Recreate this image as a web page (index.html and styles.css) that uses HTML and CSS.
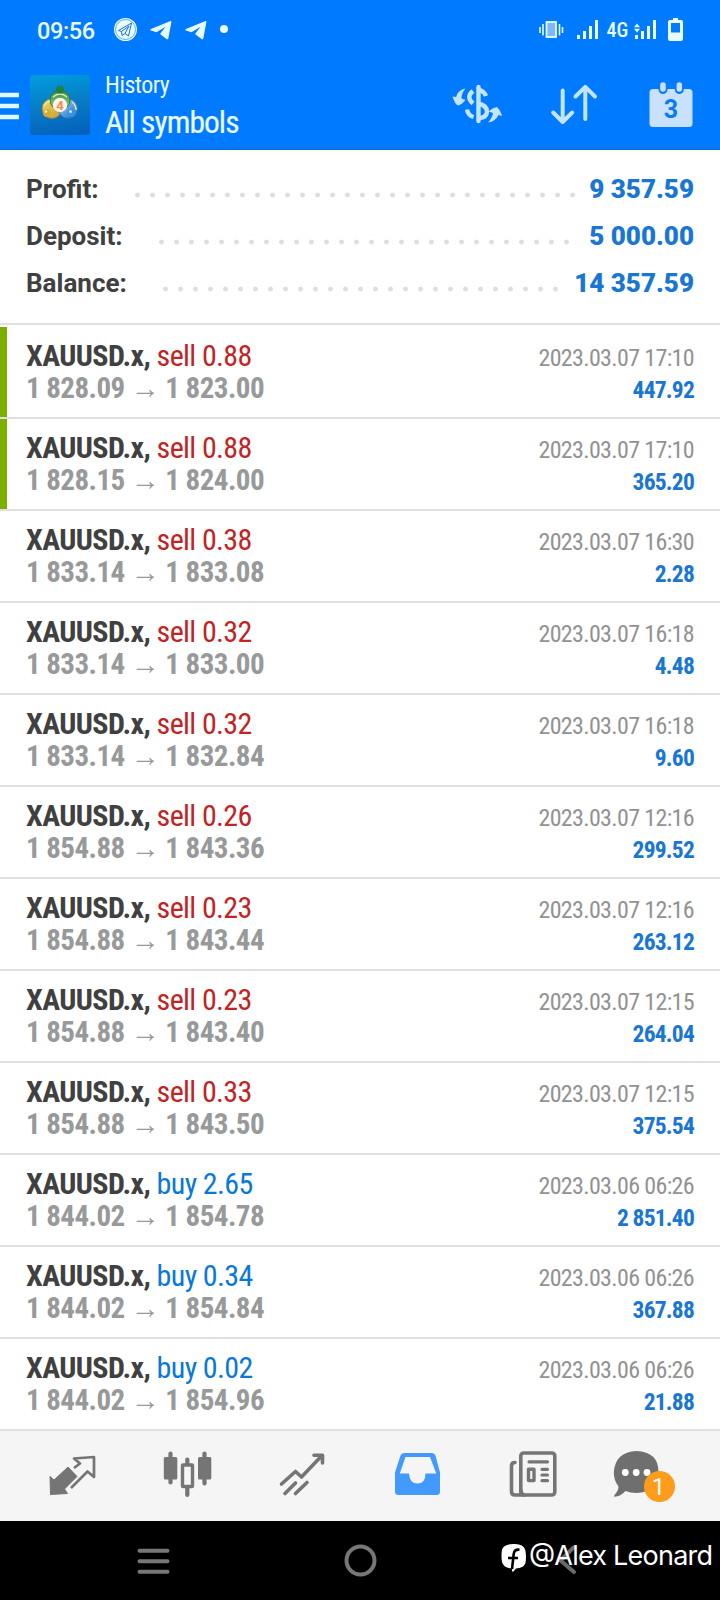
FILE: index.html
```html
<!DOCTYPE html>
<html lang="en">
<head>
<meta charset="utf-8">
<title>History</title>
<link rel="stylesheet" href="styles.css">
</head>
<body>
<header class="top">
  <div class="status">
    <span class="clock">09:56</span>
    <svg class="notif" width="120" height="28" viewBox="112 16 120 28">
      <circle cx="125.500" cy="29.500" r="11.500" fill="#e8fbff"/>
      <circle cx="125.500" cy="29.500" r="10" fill="none" stroke="#2a86f0" stroke-width=".7"/>
      <path d="M118.500 30.500L131.500 23L128.500 36L125 33.500L122 35.500L121.500 31.500Z M121.500 31.500L129 26L125 33.500" fill="none" stroke="#1c6fd0" stroke-width="1"/>
      <path id="plane" d="M151 29L170.500 21Q171.500 20.800 171.400 22L168.300 38.500Q168 39.900 166.500 39L160 34L165.500 26.800L156.500 32.200L151 30.500Q149.200 29.800 151 29Z" fill="#e8fbff"/>
      <use href="#plane" x="35"/>
      <circle cx="224" cy="29" r="4" fill="#e8fbff"/>
    </svg>
    <svg class="signals" width="150" height="28" viewBox="536 16 150 28" fill="#e8fbff">
      <path d="M540 27v6M543 24v11.500M559.500 24v11.500M562.500 27v6" stroke="#e8fbff" stroke-width="1.600"/>
      <rect x="546.500" y="22" width="9.500" height="15" fill="#7db8ff" stroke="#e8fbff" stroke-width="1.800"/>
      <path d="M577 35h3v4h-3zM583 31h3v8h-3zM589 26h3v13h-3zM595 20h3v19h-3z"/>
      <text class="net" x="606.500" y="37">4G</text>
      <path d="M635 35h3v4h-3zM641 31h3v8h-3zM647 26h3v13h-3zM653 20h3v19h-3z"/>
      <path d="M637 23.500l3 3.700h-6zM637 32.500l3-3.700h-6z"/>
      <path fill-rule="evenodd" d="M673 18h5v2h3q2 0 2 2v17q0 2-2 2h-11q-2 0-2-2v-17q0-2 2-2h3zM671 23v9.500h9v-9.500z"/>
    </svg>
  </div>
  <div class="appbar">
    <svg class="burger" width="19" height="28" viewBox="0 0 19 28"><path d="M0 3h19M0 14h19M0 25h19" stroke="#e0f8ff" stroke-width="4.500"/></svg>
    <svg class="logo" width="60" height="60" viewBox="0 0 60 60">
      <defs>
        <linearGradient id="bg" x1=".4" y1="0" x2=".6" y2="1"><stop offset="0" stop-color="#0099dc"/><stop offset=".5" stop-color="#087bc4"/><stop offset="1" stop-color="#0462bd"/></linearGradient>
        <linearGradient id="gr" x2="0" y2="1"><stop offset="0" stop-color="#2c8a4b"/><stop offset="1" stop-color="#a4d878"/></linearGradient>
        <linearGradient id="ye" x2="1" y2="1"><stop offset="0" stop-color="#f0dc6c"/><stop offset="1" stop-color="#c99c2c"/></linearGradient>
        <linearGradient id="bl" x2="1" y2="1"><stop offset="0" stop-color="#9fd8ff"/><stop offset="1" stop-color="#1c6cc0"/></linearGradient>
      </defs>
      <rect width="60" height="60" rx="3" fill="url(#bg)"/>
      <circle cx="22" cy="33.500" r="9.800" fill="url(#ye)" stroke="#a38a35"/>
      <circle cx="38" cy="33.500" r="9.800" fill="url(#bl)" stroke="#2d73b4"/>
      <circle cx="30" cy="25" r="10" fill="url(#gr)" stroke="#2f7650"/>
      <path d="M23 22q7-6 14 0M14 31q2-4 6-5M42 27q4 3 4 8" fill="none" stroke="#d9f0a8" stroke-width="1.500"/>
      <circle cx="30" cy="14.500" r="4" fill="#238044"/>
      <circle cx="17" cy="38" r="4" fill="#d6aa36"/>
      <circle cx="41.500" cy="38" r="4" fill="#3a8fe0"/>
      <circle cx="40.500" cy="36.500" r="1.500" fill="#cbeaff"/><circle cx="16" cy="36.500" r="1.300" fill="#fff2ae"/>
      <circle cx="30" cy="30" r="7.200" fill="#fff4e8"/>
      <text class="four" x="30" y="34.500" text-anchor="middle">4</text>
    </svg>
    <div class="titles"><div class="t1">History</div><div class="t2">All symbols</div></div>
    <svg class="actions" width="248" height="52" viewBox="450 78 248 52">
      <g fill="none" stroke="#c4e5ff" stroke-width="4.400">
        <path d="M478.500 87v34" stroke-linecap="round"/>
        <path d="M486 96q-2-5-7-6.200M478 103.500q9 2 9 8t-8 6.500"/>
        <path d="M473 91Q465.500 97 473 103.500M467 109.500Q468 115.500 473.500 117"/>
      </g>
      <path d="M465.500 88.500Q458 89.500 456.200 97L452.500 96.500Q455 104.500 458 105.500Q462 104.500 465.500 100L461.500 98.500Q461.500 93 465.500 88.500ZM488 122.500Q495.500 121.500 498.500 115L502 116Q500 109 496.500 107Q492 108 488.500 111.500L493 113Q492 118.500 488 122.500Z" fill="#c4e5ff"/>
      <path d="M562.700 90.500V122M553.200 112.500L562.700 122L572.200 112.500M585.300 119V88M575.500 96.500L585.300 86.800L595 96.500" fill="none" stroke="#c4e5ff" stroke-width="4" stroke-linecap="round" stroke-linejoin="round"/>
      <rect x="649.500" y="89" width="43" height="38" rx="3.500" fill="#c9e1ff"/>
      <path d="M663 86v3.500M679.300 86v3.500" stroke="#087bf8" stroke-width="9" stroke-linecap="round"/>
      <path d="M663 85v4M679.300 85v4" stroke="#c9e1ff" stroke-width="5.500" stroke-linecap="round"/>
      <text class="day" x="671" y="117.500" text-anchor="middle">3</text>
    </svg>
  </div>
</header>
<section class="summary">
  <div class="sum"><span>Profit:</span><i class="dots d30"></i><b>9 357.59</b></div>
  <div class="sum"><span>Deposit:</span><i class="dots d28"></i><b>5 000.00</b></div>
  <div class="sum"><span>Balance:</span><i class="dots d27"></i><b>14 357.59</b></div>
</section>
<main class="deals">
  <article class="deal tp"><div><h2>XAUUSD.x, <span class="sell">sell 0.88</span></h2><p>1 828.09 → 1 823.00</p></div><div class="right"><time>2023.03.07 17:10</time><b>447.92</b></div></article>
  <article class="deal tp"><div><h2>XAUUSD.x, <span class="sell">sell 0.88</span></h2><p>1 828.15 → 1 824.00</p></div><div class="right"><time>2023.03.07 17:10</time><b>365.20</b></div></article>
  <article class="deal"><div><h2>XAUUSD.x, <span class="sell">sell 0.38</span></h2><p>1 833.14 → 1 833.08</p></div><div class="right"><time>2023.03.07 16:30</time><b>2.28</b></div></article>
  <article class="deal"><div><h2>XAUUSD.x, <span class="sell">sell 0.32</span></h2><p>1 833.14 → 1 833.00</p></div><div class="right"><time>2023.03.07 16:18</time><b>4.48</b></div></article>
  <article class="deal"><div><h2>XAUUSD.x, <span class="sell">sell 0.32</span></h2><p>1 833.14 → 1 832.84</p></div><div class="right"><time>2023.03.07 16:18</time><b>9.60</b></div></article>
  <article class="deal"><div><h2>XAUUSD.x, <span class="sell">sell 0.26</span></h2><p>1 854.88 → 1 843.36</p></div><div class="right"><time>2023.03.07 12:16</time><b>299.52</b></div></article>
  <article class="deal"><div><h2>XAUUSD.x, <span class="sell">sell 0.23</span></h2><p>1 854.88 → 1 843.44</p></div><div class="right"><time>2023.03.07 12:16</time><b>263.12</b></div></article>
  <article class="deal"><div><h2>XAUUSD.x, <span class="sell">sell 0.23</span></h2><p>1 854.88 → 1 843.40</p></div><div class="right"><time>2023.03.07 12:15</time><b>264.04</b></div></article>
  <article class="deal"><div><h2>XAUUSD.x, <span class="sell">sell 0.33</span></h2><p>1 854.88 → 1 843.50</p></div><div class="right"><time>2023.03.07 12:15</time><b>375.54</b></div></article>
  <article class="deal"><div><h2>XAUUSD.x, <span class="buy">buy 2.65</span></h2><p>1 844.02 → 1 854.78</p></div><div class="right"><time>2023.03.06 06:26</time><b>2 851.40</b></div></article>
  <article class="deal"><div><h2>XAUUSD.x, <span class="buy">buy 0.34</span></h2><p>1 844.02 → 1 854.84</p></div><div class="right"><time>2023.03.06 06:26</time><b>367.88</b></div></article>
  <article class="deal"><div><h2>XAUUSD.x, <span class="buy">buy 0.02</span></h2><p>1 844.02 → 1 854.96</p></div><div class="right"><time>2023.03.06 06:26</time><b>21.88</b></div></article>
</main>
<nav class="tabs">
  <svg width="720" height="90" viewBox="0 1431 720 90">
    <path d="M68 1467L77 1476.500L64.500 1489L67.500 1493.500L50.500 1494.500L50 1476.500L54 1480Z" fill="#757575" stroke="#757575" stroke-width="1" stroke-linejoin="round"/>
    <g fill="none" stroke="#757575" stroke-width="2.700" stroke-linejoin="round">
      <path d="M74 1468L80 1463.500L74 1458.500L94 1457V1477L87.500 1471.500L71 1488"/>
    </g>
    <g stroke="#757575" stroke-width="4.200" stroke-linecap="round">
      <path d="M170.500 1453.500V1482.500M204.500 1453.500V1483.500M187.300 1459.500V1466M187.300 1487V1495"/>
    </g>
    <g fill="#757575"><rect x="163.800" y="1457" width="13.500" height="22.500" rx="1.500"/><rect x="198" y="1457" width="13.300" height="22.500" rx="1.500"/></g>
    <rect x="182.500" y="1465" width="10" height="21.500" rx=".5" fill="#f5f5f5" stroke="#757575" stroke-width="3.400"/>
    <g fill="none" stroke="#757575" stroke-width="3.600" stroke-linecap="round" stroke-linejoin="round">
      <path d="M281.500 1484L295.500 1471.500L301.500 1477L321.500 1456M314 1455.300H322.500V1463M285 1493.500L295.500 1483M295.500 1493.500L307 1482.500"/>
    </g>
    <path fill-rule="evenodd" fill="#429aff" d="M404 1453h28q2.500 0 3.500 2.500l4.500 17v19q0 3.500-3.500 3.500H398.500q-3.500 0-3.500-3.500v-19l5.500-17q1-2.500 3.500-2.500zM405.500 1457L399.800 1473.500H409Q409.500 1483.500 417.500 1483.500T425.500 1473.500H436.300L430 1457Z"/>
    <g fill="none" stroke="#757575" stroke-linecap="round" stroke-linejoin="round">
      <rect x="520.800" y="1453" width="34" height="42" rx="3" stroke-width="3.600"/>
      <path d="M515 1462.500Q511.500 1462.500 511.500 1466V1491.500Q511.500 1495 515 1495H524Q520.800 1494 520.800 1490" stroke-width="3.600"/>
      <path d="M529 1461.800H547.500M542 1469.300H547.500M542 1475H547.500M542 1480.700H547.500" stroke-width="3.200"/>
      <rect x="528.500" y="1469.300" width="5.500" height="11.300" stroke-width="3.400"/>
    </g>
    <path d="M636.500 1451Q658.500 1452 658.500 1472T636.500 1493Q630 1493 625.500 1491Q620.500 1496.500 614.500 1496.800Q613.500 1496.500 614.500 1495Q618.500 1490.500 618.500 1486.500Q613.800 1480.500 613.800 1472.500Q615 1452 636.500 1451Z" fill="#6f6f6f"/>
    <g fill="#fff"><circle cx="625.300" cy="1472.500" r="3.400"/><circle cx="636.200" cy="1472.500" r="3.400"/><circle cx="647" cy="1472.500" r="3.400"/></g>
    <circle cx="659.500" cy="1486.500" r="15.500" fill="#ff9c1b"/>
    <text class="badge" x="658.500" y="1495" text-anchor="middle">1</text>
  </svg>
</nav>
<footer class="sysnav">
  <svg width="720" height="79" viewBox="0 1521 720 79">
    <g fill="none" stroke="#777" stroke-width="4" stroke-linecap="round">
      <path d="M139.500 1550.700H167.500M139.500 1561.300H167.500M139.500 1571.700H167.500"/>
      <circle cx="360.500" cy="1560.500" r="14"/>
      <path d="M573.500 1547.500L560.500 1560.500L574 1572" stroke="#6a6a6a"/>
    </g>
    <path d="M513.500 1544q10-.5 11.800 6 1.400 7.500 0 13.500-1.800 4.500-9.300 5L513 1572Q511.500 1571.500 512 1568.500 503.500 1568 502 1562q-1-7 0-12.500 2-5.500 11.500-5.500Z" fill="#fff"/>
    <path d="M519.500 1549.700Q514.500 1549 513.700 1554L512 1569M508 1558H518" fill="none" stroke="#000" stroke-width="2.600"/>
    <text class="handle" x="529" y="1565" textLength="184">@Alex Leonard</text>
  </svg>
</footer>
</body>
</html>
```
FILE: styles.css
```css
* { box-sizing: border-box; margin: 0; padding: 0; }
body { width: 720px; height: 1600px; background: #fff; font-family: "Roboto Condensed", Roboto, sans-serif; overflow: hidden; }
svg { display: block; flex: none; }
.top { height: 150px; background: #007aff; border-bottom: 1px solid #1668c4; color: #e8fbff; }
.status { height: 60px; padding: 16px 34px 0 37px; display: flex; align-items: flex-start; }
.clock { width: 75px; padding-top: 1px; font: 500 23.500px/28px Roboto, sans-serif; letter-spacing: -.400px; }
.signals { margin-left: auto; }
.net { font: 500 20px "Roboto Condensed", sans-serif; }
.appbar { display: flex; align-items: flex-start; }
.burger { margin-top: 32px; }
.logo { margin: 15px 0 0 11px; }
.four { font: bold 13px Roboto, sans-serif; fill: #ef8b50; }
.titles { margin: 11px 0 0 15px; white-space: nowrap; }
.t1 { font-size: 24px; line-height: 29px; letter-spacing: -.500px; }
.t2 { margin-top: 4px; font-size: 31.500px; line-height: 38px; letter-spacing: -.950px; -webkit-text-stroke: .2px #e8fbff; }
.actions { margin: 18px 22px 0 auto; }
.day { font: bold 25px Roboto, sans-serif; fill: #087bf0; }
.summary { height: 175px; margin-bottom: 2px; padding: 16px 26px 0; border-bottom: 2px solid #e0e0e0; }
.sum { display: flex; align-items: center; height: 47px; font: 700 26px/47px Roboto, sans-serif; color: #404040; }
.sum b { margin-left: auto; color: #1976d2; }
.sum span { width: 104px; white-space: nowrap; }
.dots { height: 6px; margin-top: 10px; background: radial-gradient(circle, #dedede 2px, transparent 2.800px) 0 0 / 15px 6px repeat-x; }
.d30 { width: 450px; }
.d28 { width: 420px; margin-left: 24px; }
.d27 { width: 405px; margin-left: 28px; }
.deal { height: 92px; padding: 13px 26px 0; border-bottom: 2px solid #e0e0e0; display: flex; justify-content: space-between; position: relative; }
.tp::before { content: ""; position: absolute; left: 0; top: 0; width: 7px; height: 90px; background: #7cb000; }
h2 { font-size: 30px; line-height: 32px; letter-spacing: -.600px; color: #404040; white-space: nowrap; }
h2 span { font-weight: 400; letter-spacing: -.620px; }
.sell { color: #c02424; }
.buy { color: #0a78d8; }
.deal p { font-size: 29px; line-height: 32px; font-weight: 700; letter-spacing: -.550px; color: #97999a; }
.right { text-align: right; }
time, .right b { display: block; line-height: 32px; }
time { padding-top: 2px; font-size: 24px; letter-spacing: -.650px; color: #929292; }
.right b { font-size: 23.500px; letter-spacing: -.800px; color: #1976d2; }
.tabs { background: #f5f5f5; height: 90px; }
.badge { font: 24px Roboto, sans-serif; fill: #fff; }
.sysnav { background: #000; height: 79px; }
.handle { font: 27px Inter, sans-serif; fill: #fff; }
```
